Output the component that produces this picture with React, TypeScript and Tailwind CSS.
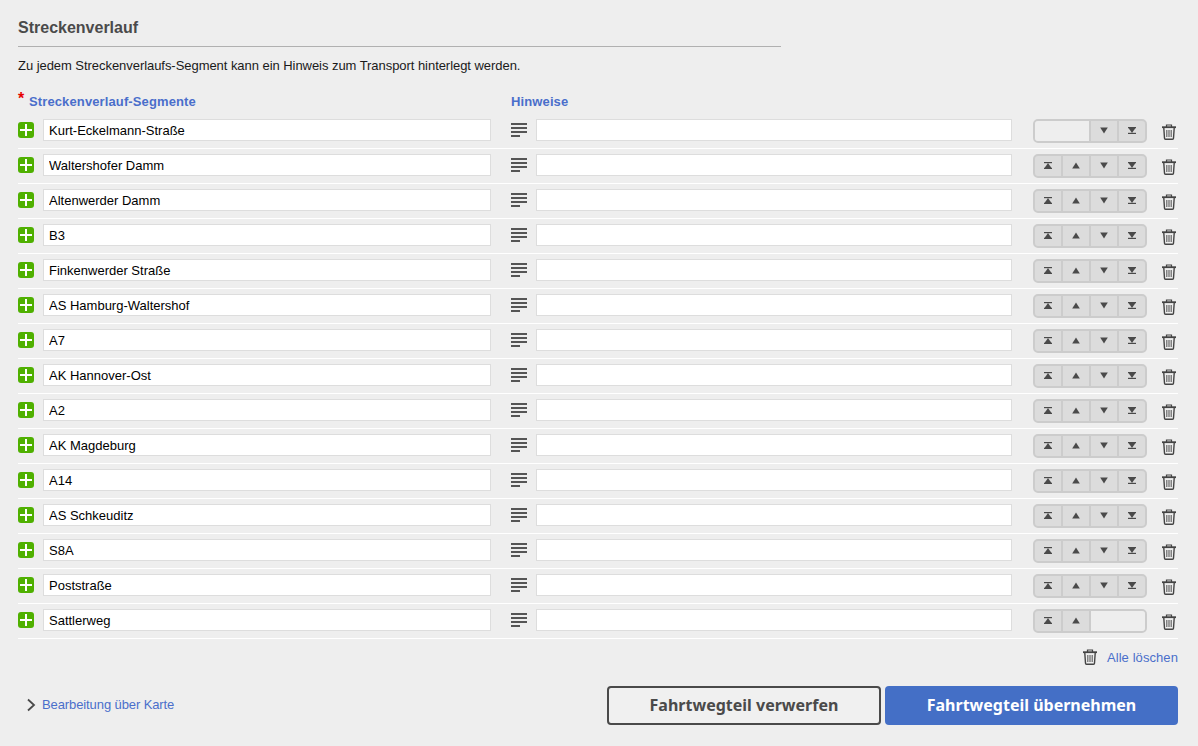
import React from 'react';

const segments = [
  'Kurt-Eckelmann-Straße',
  'Waltershofer Damm',
  'Altenwerder Damm',
  'B3',
  'Finkenwerder Straße',
  'AS Hamburg-Waltershof',
  'A7',
  'AK Hannover-Ost',
  'A2',
  'AK Magdeburg',
  'A14',
  'AS Schkeuditz',
  'S8A',
  'Poststraße',
  'Sattlerweg',
];

const TrashIcon = () => (
  <svg width="16" height="17" viewBox="0 0 16 17" fill="none" stroke="#444444" strokeWidth="1.2">
    <path d="M1 3.2h14" strokeWidth="1.8" />
    <path d="M5.5 3V1h5V3" />
    <path d="M2.8 4l.7 10.200c0 .6.4 1 1 1h7c.6 0 1-.4 1-1L13.200 4" strokeWidth="1.4" />
    <path d="M5.800 6v7M8 6v7M10.200 6v7" strokeWidth="1.2" stroke="#666" />
  </svg>
);

const NotesIcon = () => (
  <svg width="16" height="14" viewBox="0 0 16 14" fill="#555">
    <rect x="0" y="0" width="16" height="2" />
    <rect x="0" y="4" width="16" height="2" />
    <rect x="0" y="8" width="16" height="2" />
    <rect x="0" y="12" width="9" height="2" />
  </svg>
);

const PlusIcon = () => (
  <div className="flex h-4 w-4 shrink-0 items-center justify-center rounded-[3px] bg-[#4fb000]">
    <svg width="12" height="12" viewBox="0 0 12 12" fill="#fff">
      <rect x="0" y="5" width="12" height="2" />
      <rect x="5" y="0" width="2" height="12" />
    </svg>
  </div>
);

type ArrowKind = 'first' | 'up' | 'down' | 'last';

const Arrow = ({ kind }: { kind: ArrowKind }) => (
  <svg width="10" height="7" viewBox="0 0 10 7" fill="#4a4a4a">
    {kind === 'first' && (
      <>
        <rect x="1" y="0" width="8" height="1.200" />
        <path d="M5 1L8.500 6h-7z" />
        <rect x="1" y="5.800" width="8" height="1.200" />
      </>
    )}
    {kind === 'up' && <path d="M5 .5L8.800 6.500H1.200z" />}
    {kind === 'down' && <path d="M1.200 .5h7.600L5 6.500z" />}
    {kind === 'last' && (
      <>
        <rect x="1" y="0" width="8" height="1.200" />
        <path d="M1.500 1h7L5 6z" />
        <rect x="1" y="5.800" width="8" height="1.200" />
      </>
    )}
  </svg>
);

const MoveCell = ({ kind, border }: { kind: ArrowKind; border?: boolean }) => (
  <div className={`flex h-full w-7 items-center justify-center pb-px ${border ? 'border-r-2 border-[#cccccc]' : ''}`}>
    <Arrow kind={kind} />
  </div>
);

const MoveButtons = ({ isFirst, isLast }: { isFirst: boolean; isLast: boolean }) => (
  <div className="ml-[21px] flex h-6 w-[114px] shrink-0 overflow-hidden rounded-[5px] border-2 border-[#cccccc] bg-[#dcdcdc]">
    {isFirst ? (
      <div className="h-full w-14 border-r-2 border-[#cccccc] bg-[#eeeeee]" />
    ) : (
      <>
        <MoveCell kind="first" border />
        <MoveCell kind="up" border />
      </>
    )}
    {isLast ? (
      <div className="h-full flex-1 bg-[#eeeeee]" />
    ) : (
      <>
        <MoveCell kind="down" border />
        <div className="flex h-full flex-1 items-center justify-center pb-px">
          <Arrow kind="last" />
        </div>
      </>
    )}
  </div>
);

const SegmentRow = ({ name, index, total }: { name: string; index: number; total: number }) => (
  <div className="flex h-[35px] w-[1160px] items-start border-b border-white pt-[5px]">
    <div className="mt-[3px]">
      <PlusIcon />
    </div>
    <input
      readOnly
      value={name}
      className="ml-[9px] h-[22px] w-[448px] shrink-0 border border-[#dddddd] bg-white px-[5px] text-[13px] text-black outline-none"
    />
    <div className="ml-5 mt-1">
      <NotesIcon />
    </div>
    <input readOnly value="" className="ml-[9px] h-[22px] w-[476px] shrink-0 border border-[#dddddd] bg-white outline-none" />
    <MoveButtons isFirst={index === 0} isLast={index === total - 1} />
    <div className="ml-[14px] mt-[5px]">
      <TrashIcon />
    </div>
  </div>
);

export default function App() {
  return (
    <div className="h-[746px] w-[1198px] overflow-hidden bg-[#eeeeee] pl-[18px] pt-[18px] font-['Liberation_Sans',Arial,sans-serif] text-[13px] text-[#1a1a1a]">
      <h2 className="text-[16px] font-bold leading-[20px] text-[#4a4a4a]">Streckenverlauf</h2>
      <div className="mt-[8px] h-px w-[763px] bg-[#b0b0b0]" />
      <p className="mt-[11px] leading-[16px] tracking-[-0.05px]">
        Zu jedem Streckenverlaufs-Segment kann ein Hinweis zum Transport hinterlegt werden.
      </p>

      <div className="mt-[21px] flex h-[14px] items-center font-bold leading-[14px] tracking-[0.12px] text-[#4a6ecb]">
        <span className="w-3 -translate-y-[3px] text-[16px] text-[#e60000]">*</span>
        <span className="-ml-px w-[482px]">Streckenverlauf-Segmente</span>
        <span>Hinweise</span>
      </div>

      <div className="mt-[5px]">
        {segments.map((name, i) => (
          <SegmentRow key={name} name={name} index={i} total={segments.length} />
        ))}
      </div>

      <div className="mt-[9px] flex w-[1160px] items-center justify-end gap-[9px]">
        <TrashIcon />
        <a className="tracking-[0.08px] text-[#4a6ecb]">Alle löschen</a>
      </div>

      <div className="mt-[18px] flex w-[1160px] items-center">
        <div className="ml-2 flex items-center gap-[6px] tracking-[-0.1px] text-[#4a6ecb]">
          <svg width="10" height="14" viewBox="0 0 10 14" fill="none" stroke="#4a4a4a" strokeWidth="1.800">
            <path d="M2 1.500L8 7l-6 5.500" />
          </svg>
          <a>Bearbeitung über Karte</a>
        </div>
        <div className="ml-auto flex gap-1">
          <button className="h-[39px] w-[274px] rounded-[4px] border-2 border-[#4a4a4a] bg-[#f0f0f0] font-['Noto_Sans',sans-serif] text-[16px] font-bold text-[#4a4a4a]">
            Fahrtwegteil verwerfen
          </button>
          <button className="h-[39px] w-[293px] rounded-[4px] bg-[#446fc6] font-['Noto_Sans',sans-serif] text-[16px] font-bold text-white">
            Fahrtwegteil übernehmen
          </button>
        </div>
      </div>
    </div>
  );
}
